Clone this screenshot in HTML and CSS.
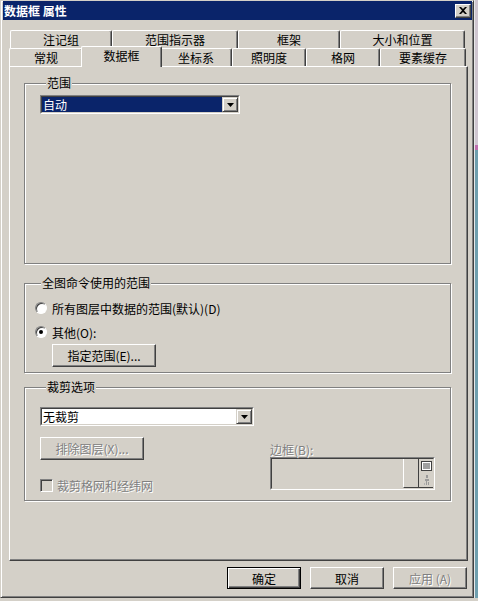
FILE: index.html
```html
<!DOCTYPE html>
<html lang="zh-CN">
<head>
    <meta charset="UTF-8">
    <title>数据框 属性</title>
    <link rel="stylesheet" href="styles.css">
</head>
<body>
    <div class="window">
        <div class="titlebar">
            <span class="title">数据框 属性</span>
            <button type="button" class="close">
                <svg width="8" height="7" viewBox="0 0 8 7"><path d="M0 0h2l2 2 2-2h2L5 3.5 8 7H6L4 5 2 7H0l3-3.5z" fill="#000"/></svg>
            </button>
        </div>

        <div class="tabs">
            <div class="tab-row back">
                <div class="tab">注记组</div>
                <div class="tab">范围指示器</div>
                <div class="tab">框架</div>
                <div class="tab">大小和位置</div>
            </div>
            <div class="tab-row front">
                <div class="tab">常规</div>
                <div class="tab active">数据框</div>
                <div class="tab">坐标系</div>
                <div class="tab">照明度</div>
                <div class="tab">格网</div>
                <div class="tab">要素缓存</div>
            </div>
        </div>

        <div class="panel">
            <div class="group group-extent">
                <span class="legend">范围</span>
                <div class="combo combo-extent">
                    <div class="combo-inner">
                        <span class="combo-value selected">自动</span>
                        <span class="combo-btn"><svg width="7" height="4" viewBox="0 0 7 4"><path d="M0 0h7L3.5 4z" fill="#000"/></svg></span>
                    </div>
                </div>
            </div>

            <div class="group group-full">
                <span class="legend">全图命令使用的范围</span>
                <div class="option first">
                    <span class="radio"></span>
                    <span>所有图层中数据的范围(默认)(D)</span>
                </div>
                <div class="option">
                    <span class="radio checked"></span>
                    <span>其他(O):</span>
                </div>
                <button type="button" class="btn btn-extent">指定范围(E)...</button>
            </div>

            <div class="group group-clip">
                <span class="legend">裁剪选项</span>
                <div class="combo combo-clip">
                    <div class="combo-inner">
                        <span class="combo-value">无裁剪</span>
                        <span class="combo-btn"><svg width="7" height="4" viewBox="0 0 7 4"><path d="M0 0h7L3.5 4z" fill="#000"/></svg></span>
                    </div>
                </div>
                <div class="clip-row">
                    <div class="clip-left">
                        <button type="button" class="btn btn-layers disabled">排除图层(X)...</button>
                        <div class="check-row">
                            <span class="checkbox"></span>
                            <span class="disabled-text">裁剪格网和经纬网</span>
                        </div>
                    </div>
                    <div class="clip-right">
                        <div class="disabled-text border-label">边框(B):</div>
                        <div class="border-box">
                            <div class="border-inner">
                                <div class="border-fill"></div>
                                <div class="border-tools">
                                    <span class="tool">
                                        <svg width="11" height="10" viewBox="0 0 11 10"><rect x="0.5" y="0.5" width="10" height="9" fill="#fff" stroke="#404040"/><path d="M2 3h7M2 5h7M2 7h7" stroke="#404040"/></svg>
                                    </span>
                                    <span class="tool">
                                        <svg width="11" height="12" viewBox="0 0 11 12"><path d="M5 1h2v3H5zM4 5h4v2H4zM5 7h1v4H5zM7 8h1v3H7z" fill="#9a9a9a"/><path d="M3 9h1v2H3z" fill="#b0b0b0"/></svg>
                                    </span>
                                </div>
                            </div>
                        </div>
                    </div>
                </div>
            </div>
        </div>

        <div class="actions">
            <button type="button" class="btn default">确定</button>
            <button type="button" class="btn">取消</button>
            <button type="button" class="btn disabled">应用 (A)</button>
        </div>
    </div>
    <div class="desk"></div>
</body>
</html>
```

FILE: styles.css
```css
body {
    margin: 0;
    display: flex;
    background-color: #d4d0c8;
    font-family: "Noto Sans CJK SC", "Liberation Sans", sans-serif;
    font-size: 12px;
    color: #000;
}

.window {
    width: 474px;
    height: 598px;
    box-sizing: border-box;
    border: 1px solid;
    border-color: #d4d0c8 #404040 #404040 #d4d0c8;
    box-shadow: inset 1px 1px #fff, inset -1px -1px #808080;
    padding: 0 1px 0 2px;
    background-color: #d4d0c8;
}

.desk {
    flex: 1;
    height: 598px;
    background: linear-gradient(#cfc6d0 0, #cfc6d0 145px, #c070b0 145px, #c070b0 150px, #6f9fae 150px);
    border-left: 1px solid #e8e8e8;
}

.titlebar {
    height: 19px;
    display: flex;
    align-items: center;
    justify-content: space-between;
    padding: 0 1px 0 1px;
    background-color: #0a246a;
    color: #fff;
    font-weight: bold;
}

.close {
    width: 16px;
    height: 14px;
    box-sizing: border-box;
    padding: 0;
    display: flex;
    align-items: center;
    justify-content: center;
    border: 1px solid;
    border-color: #fff #404040 #404040 #fff;
    box-shadow: inset -1px -1px #808080;
    background-color: #d4d0c8;
}

.tabs {
    margin: 10px 0 0 6px;
}

.tab-row {
    display: grid;
    height: 18px;
}

.tab-row.back {
    grid-template-columns: 102px 126px 102px 125px;
    margin-left: 1px;
}

.tab-row.front {
    grid-template-columns: 74px 77px 72px 74px 74px 86px;
}

.tab {
    border-top: 1px solid #fff;
    border-left: 1px solid #fff;
    border-right: 1px solid #404040;
    border-radius: 2px 2px 0 0;
    box-shadow: inset -1px 0 #808080;
    text-align: center;
    line-height: 17px;
    white-space: nowrap;
}

.tab.active {
    margin: -2px -2px -1px;
    position: relative;
    z-index: 1;
    background-color: #d4d0c8;
}

.panel {
    margin-left: 6px;
    width: 459px;
    height: 495px;
    box-sizing: border-box;
    border-top: 1px solid #fff;
    border-left: 1px solid #fff;
    border-right: 1px solid #404040;
    border-bottom: 1px solid #404040;
    box-shadow: inset -1px -1px #808080;
    padding: 16px 0 0 14px;
}

.group {
    width: 427px;
    box-sizing: border-box;
    border: 1px solid #808080;
    box-shadow: inset 1px 1px #fff, 1px 1px #fff;
}

.legend {
    display: block;
    width: max-content;
    margin: -8px 0 0 6px;
    padding: 0 1px;
    line-height: 14px;
    background-color: #d4d0c8;
}

.group-extent {
    height: 181px;
    padding-left: 15px;
}

.group-full {
    height: 90px;
    margin-top: 19px;
    padding-left: 10px;
}

.group-clip {
    height: 114px;
    margin-top: 14px;
    padding: 0 15px;
}

.combo {
    height: 19px;
    box-sizing: border-box;
    border: 1px solid;
    border-color: #808080 #fff #fff #808080;
}

.combo-inner {
    height: 100%;
    box-sizing: border-box;
    display: flex;
    border: 1px solid;
    border-color: #404040 #d4d0c8 #d4d0c8 #404040;
    background-color: #fff;
}

.combo-value {
    flex: 1;
    line-height: 15px;
    padding-left: 1px;
}

.combo-value.selected {
    background-color: #0a246a;
    color: #fff;
}

.combo-btn {
    width: 16px;
    box-sizing: border-box;
    display: flex;
    align-items: center;
    justify-content: center;
    border: 1px solid;
    border-color: #d4d0c8 #404040 #404040 #d4d0c8;
    box-shadow: inset 1px 1px #fff, inset -1px -1px #808080;
    background-color: #d4d0c8;
}

.combo-extent {
    width: 200px;
    margin-top: 5px;
}

.combo-clip {
    width: 214px;
    margin-top: 13px;
}

.option {
    display: flex;
    align-items: center;
    gap: 5px;
    height: 16px;
    margin-top: 8px;
}

.option.first {
    margin-top: 10px;
}

.radio {
    width: 12px;
    height: 12px;
    box-sizing: border-box;
    border-radius: 50%;
    border: 1px solid;
    border-color: #808080 #fff #fff #808080;
    box-shadow: inset 1px 1px #404040;
    background-color: #fff;
    display: flex;
    align-items: center;
    justify-content: center;
}

.radio.checked::after {
    content: "";
    width: 4px;
    height: 4px;
    border-radius: 50%;
    background-color: #000;
}

.btn {
    width: 74px;
    height: 22px;
    box-sizing: border-box;
    padding: 0;
    border: 1px solid;
    border-color: #fff #404040 #404040 #fff;
    box-shadow: inset -1px -1px #808080;
    background-color: #d4d0c8;
    font: inherit;
    color: #000;
}

.btn.default {
    border-color: #000;
    box-shadow: inset 1px 1px #fff, inset -1px -1px #404040, inset -2px -2px #808080;
}

.btn.disabled,
.disabled-text {
    color: #808080;
    text-shadow: 1px 1px #fff;
}

.btn-extent {
    width: 104px;
    height: 23px;
    margin: 4px 0 0 17px;
}

.clip-row {
    display: flex;
    justify-content: space-between;
    margin-top: 11px;
}

.btn-layers {
    width: 104px;
    height: 23px;
}

.check-row {
    display: flex;
    align-items: center;
    gap: 4px;
    margin-top: 17px;
}

.checkbox {
    width: 13px;
    height: 13px;
    box-sizing: border-box;
    border: 1px solid;
    border-color: #808080 #fff #fff #808080;
    box-shadow: inset 1px 1px #404040, inset -1px -1px #d4d0c8;
}

.clip-right {
    width: 165px;
}

.border-label {
    margin-top: 6px;
    line-height: 14px;
}

.border-box {
    height: 33px;
    box-sizing: border-box;
    border: 1px solid;
    border-color: #808080 #fff #fff #808080;
}

.border-inner {
    height: 100%;
    box-sizing: border-box;
    display: flex;
    border: 1px solid;
    border-color: #404040 #d4d0c8 #d4d0c8 #404040;
}

.border-fill {
    flex: 1;
}

.border-tools {
    width: 29px;
    display: flex;
    flex-direction: column;
    align-items: flex-end;
    border-left: 1px solid #fff;
    border-bottom: 1px solid #404040;
}

.tool {
    width: 14px;
    height: 14px;
    display: flex;
    align-items: center;
    justify-content: center;
    border-left: 1px solid #404040;
}

.actions {
    display: flex;
    justify-content: flex-end;
    gap: 9px;
    margin: 6px 5px 0 0;
}
```
